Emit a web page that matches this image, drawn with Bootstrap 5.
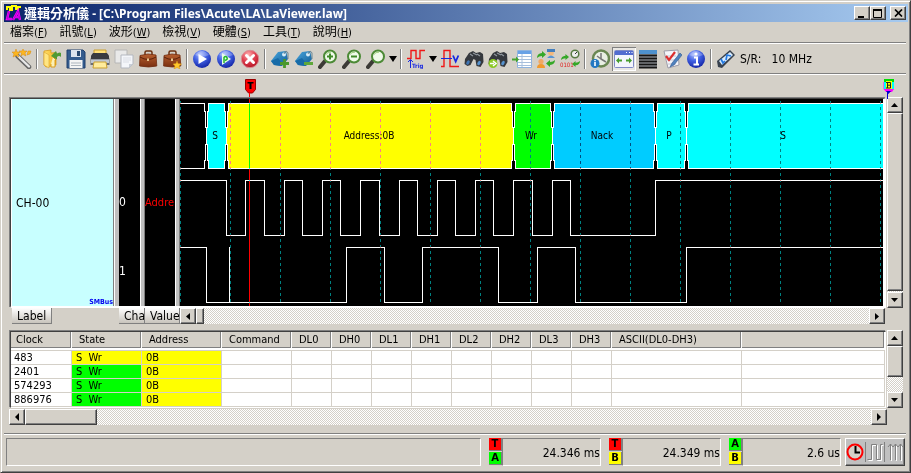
<!DOCTYPE html>
<html lang="zh-Hant">
<head>
<meta charset="utf-8">
<meta name="viewport" content="width=device-width, initial-scale=1">
<title>邏輯分析儀 - LaViewer.law</title>
<link href="https://cdn.jsdelivr.net/npm/bootstrap@5.3.0/dist/css/bootstrap.min.css" rel="stylesheet">
<style>
:root{--face:#d4d0c8;--shade:#808080;--dark:#404040}
body{background:var(--face);color:#000;font:11px/14px "DejaVu Sans Condensed","Noto Sans CJK TC",sans-serif}
button{font:inherit;color:inherit;padding:0;border:0;background:none}
.window{border:1px solid var(--face);border-right-color:var(--dark);border-bottom-color:var(--dark);box-shadow:inset 1px 1px #fff,inset -1px -1px var(--shade);padding:3px 2px 0 3px}
.titlebar{height:18px;background:linear-gradient(90deg,#0a246a,#a6caf0);color:#fff;font-weight:700;padding:0 2px 0 1px}
.titlebar h1{font:bold 12px/18px "Noto Sans","Noto Sans CJK TC",sans-serif}
.titlebar .cjk{font-size:13px}
.titlebar .app-icon{margin-right:2px}
.raised{background:var(--face);border:1px solid;border-color:#fff var(--dark) var(--dark) #fff;box-shadow:inset -1px -1px var(--shade);display:flex;align-items:center;justify-content:center;flex:none;padding:0}
.capbtn{width:16px;height:14px}
.menubar{height:20px;padding:0 6px;gap:12px}
.menubar .cjk{font-size:12px}
.rule{height:2px;background:var(--shade);border-bottom:1px solid #fff;margin-right:2px}
.tools{height:29px;padding-left:6px}
.tool{width:24px;height:24px;display:flex;align-items:center;justify-content:center;flex:none}
.tool svg{width:20px;height:20px}
.tool.pressed{background:#e9e7e3;box-shadow:inset 1px 1px var(--shade),inset -1px -1px #fff}
.drop{width:10px;height:24px;display:flex;align-items:center;justify-content:center}
.gap-line{width:2px;height:20px;margin:0 2px;background:var(--shade);border-right:1px solid #fff;flex:none}
.big{font-size:12px}
.rate{margin-left:2px}
.ruler{height:22px;padding:4px 13px 0 241px}
.ruler svg{position:relative;z-index:2}
.workspace{padding:0 5px}
.well{border:2px solid;border-color:var(--dark) #fff #fff var(--dark);box-shadow:-1px -1px var(--shade);background:#000}
.well-outer{padding:1px 0 0 1px}
.well-outer>.well{border-width:1px 3px 2px 1px}
.pane-label{width:108px;background:#c8ffff;border-left:1px solid #fff}
.pane-channel{width:26px}
.pane-value{width:35px}
.split{width:5px;background:#c0c0c0;border-left:1px solid #fff;border-right:1px solid var(--shade);flex:none}
.pane-label .split{width:6px;border-left:1px solid var(--shade);border-right:1px solid #c0c0c0;box-shadow:inset 1px 0 #fff}
.trace-pane{height:207px}
.channels{padding-top:69px}
.channels div{height:69px;line-height:69px}
.value-text{color:#f00;font-size:11px}
.smb{color:#0000f0;font:bold 7px/8px "DejaVu Sans Condensed",sans-serif}
.vbar,.hbar{background:repeating-conic-gradient(#fff 0 25%,#d4d0c8 0 50%) 0 0/2px 2px}
.vbar{width:16px;flex:none;display:flex;flex-direction:column;margin-left:1px}
.vbar .raised{width:16px;height:16px}
.hbar{height:16px;display:flex}
.hbar .raised{height:16px;width:16px}
.vbar .thumb-long{flex:1;margin-bottom:1px}
.vbar .thumb-short{height:31px}
.hbar .thumb-narrow{width:8px}
.hbar .thumb-wide{width:72px}
.panes-foot{padding:0 18px 0 3px;margin-bottom:6px}
.records-foot{margin:1px 16px 7px 0}
.headbtn{height:16px;background:linear-gradient(#fff,#c8c4bc);border-right:1px solid var(--shade);border-bottom:1px solid var(--shade);font-size:12px;overflow:hidden;text-align:left;padding-left:5px;white-space:nowrap;flex:none}
.btn-label{width:40px;margin-right:67px}
.btn-cha{width:26px}
.btn-val{width:35px}
.list-frame{background:#fff;border:1px solid;border-color:var(--dark) #fff #fff var(--dark);box-shadow:-1px -1px var(--shade)}
.records{width:100%;table-layout:fixed;border-collapse:separate;border-spacing:0}
.records th{height:18px;font-weight:400;padding:0 0 0 7px;line-height:16px;background:var(--face);border-bottom:2px solid #fff;box-shadow:inset -1px 0 #fff,inset -2px -1px var(--shade);white-space:nowrap}
.records th:first-child{padding-left:5px}
.records td{height:14px;line-height:13px;padding:0 0 0 4px;border-right:1px solid var(--face);border-bottom:1px solid var(--face);white-space:pre}
.records td:first-child{padding-left:3px}
.records tbody tr:first-child td{height:15px;border-top:1px solid var(--face)}
.yel{background:#ff0}.grn{background:#0f0}
.statusbar{padding:3px 3px 6px 2px}
.sunk{height:28px;border:1px solid;border-color:var(--shade) #fff #fff var(--shade)}
.reading{width:99px;font-size:12px;padding-top:2px}
.tags{width:13px;gap:1px}
.tagbox{height:13px;font:bold 10px/12px "DejaVu Sans",sans-serif;border-right:1px solid var(--shade);border-bottom:1px solid var(--shade);text-align:center}
.red{background:#f00}
.modes{width:60px;height:28px;background:#c0c0c0;border:1px solid;border-color:#fff var(--dark) var(--dark) #fff;box-shadow:inset -1px -1px var(--shade)}
.gridline{mix-blend-mode:difference}
.wave{fill:none;stroke:#fff;shape-rendering:crispEdges}
</style>
<script src="https://cdn.jsdelivr.net/npm/bootstrap@5.3.0/dist/js/bootstrap.bundle.min.js"></script>
</head>
<body>
<svg class="position-absolute" width="0" height="0" aria-hidden="true">
  <defs>
    <radialGradient id="gBlue" cx=".4" cy=".25" r=".8"><stop offset="0" stop-color="#a9bcff"/><stop offset=".45" stop-color="#4262e4"/><stop offset="1" stop-color="#1020a0"/></radialGradient>
    <radialGradient id="gRed" cx=".4" cy=".25" r=".8"><stop offset="0" stop-color="#ffb0b0"/><stop offset=".5" stop-color="#e04050"/><stop offset="1" stop-color="#b01020"/></radialGradient>
    <linearGradient id="gCase" x2="0" y2="1"><stop offset="0" stop-color="#b86030"/><stop offset="1" stop-color="#7a2f10"/></linearGradient>
    <linearGradient id="gTag" x2="1" y2="1"><stop offset="0" stop-color="#4aa8e0"/><stop offset="1" stop-color="#105a94"/></linearGradient>
    <linearGradient id="gFold" x2="1"><stop offset="0" stop-color="#ffe070"/><stop offset="1" stop-color="#f2b01c"/></linearGradient>
    <symbol id="case" viewBox="0 0 20 20"><path d="M7 6V3.500q0-1.500 1.500-1.500h4q1.500 0 1.500 1.500V6" fill="none" stroke="#6b3010" stroke-width="1.500"/><path d="M2 6.500l8-1.500 8 1 .8 11q-8 2-17.200 0z" fill="url(#gCase)" stroke="#702c10" stroke-width=".8"/><path d="M2 8q8 5 16 0" fill="none" stroke="#5c200a"/><rect x="9" y="9.500" width="2" height="2.500" fill="#e8c48c"/></symbol>
    <symbol id="tag" viewBox="0 0 20 20"><path d="M1 12L8 3l8-1 2 8-6 7-8-1z" fill="url(#gTag)"/><path d="M1 12l7-3 5 6-2 2-7-1z" fill="#176ba8"/><circle cx="14" cy="5.500" r="2" fill="#d6ecf8"/><path d="M14 5Q16 0 18 4v6" fill="none" stroke="#6d8794"/></symbol>
    <symbol id="lens" viewBox="0 0 20 20"><path d="M7 12L2 18" stroke="#3c3a36" stroke-width="4" stroke-linecap="round"/><circle cx="12" cy="7.500" r="6" fill="#f0faea" stroke="#4c8a36" stroke-width="2"/><path d="M8 5.500Q9.500 3 13 3.200" stroke="#9fd07f" fill="none"/></symbol>
    <symbol id="bino" viewBox="0 0 20 20"><path d="M1 10L5 4l4-2 3 2 4-1 3 2 .5 8-3 5-4-1-1-6-2-1-3 6-3 1-3-2z" fill="#35383d"/><path d="M6 5l3 2M13 5l3 2M9 4l4 2" stroke="#90979e" stroke-width="1.200"/><ellipse cx="4" cy="13.500" rx="1.500" ry="2.400" fill="#3f76b6" transform="rotate(30 4 13.500)"/><ellipse cx="15" cy="14" rx="1.500" ry="2.400" fill="#5793cf" transform="rotate(30 15 14)"/></symbol>
    <symbol id="ball" viewBox="0 0 20 20"><circle cx="10" cy="10" r="9" fill="url(#gBlue)"/><path d="M3 6q7-8 14 0-7 3-14 0z" fill="#fff" opacity=".25"/></symbol>
    <symbol id="swap" viewBox="0 0 9 9"><path d="M0 8Q0 3.500 5 3V1l4 3.500L5 8V6Q2 6 0 8z" fill="#35a828"/></symbol>
  </defs>
</svg>

<div class="window min-vh-100 d-flex flex-column">
  <header class="titlebar d-flex align-items-center">
    <svg width="17" height="16" viewBox="0 0 17 16" class="app-icon flex-shrink-0"><path d="M2 5V2h3v3h2V1h4v3h2V2h3" fill="none" stroke="#ff0" stroke-width="2"/><path d="M4 6L2 14h5M8 15l5-9 2 9M10 12h5" fill="none" stroke="#f0f" stroke-width="2.400"/><path d="M4 6L2 14h5M8 15l5-9 2 9M10 12h5" fill="none" stroke="#a000d0" stroke-width=".8"/></svg>
    <h1 class="m-0 flex-fill text-nowrap"><span class="cjk">邏輯分析儀</span> - [C:\Program Files\Acute\LA\LaViewer.law]</h1>
    <button class="raised capbtn" aria-label="Minimize"><svg width="10" height="9"><path d="M1 7h6v2H1z"/></svg></button>
    <button class="raised capbtn" aria-label="Maximize"><svg width="10" height="9"><path d="M.5 1.500h8v7h-8z" fill="none" stroke="#000"/><path d="M0 0h9v2H0z"/></svg></button>
    <button class="raised capbtn ms-1" aria-label="Close"><svg width="9" height="8"><path d="M1 .5l7 7M8 .5l-7 7" stroke="#000" stroke-width="1.700"/></svg></button>
  </header>
  <nav class="menubar d-flex align-items-center text-nowrap">
    <button><span class="cjk">檔案</span>(<u>F</u>)</button><button><span class="cjk">訊號</span>(<u>L</u>)</button><button><span class="cjk">波形</span>(<u>W</u>)</button><button><span class="cjk">檢視</span>(<u>V</u>)</button><button><span class="cjk">硬體</span>(<u>S</u>)</button><button><span class="cjk">工具</span>(<u>T</u>)</button><button><span class="cjk">說明</span>(<u>H</u>)</button>
  </nav>
  <div class="rule"></div>
  <div class="tools d-flex align-items-center" role="toolbar">
    <button class="tool" aria-label="Wizard"><svg viewBox="0 0 20 20"><path d="M5.500 7L17 18" stroke="#666" stroke-width="4.500" stroke-linecap="round"/><path d="M6 7l11 10.500" stroke="#e8e8e8" stroke-width="2.400" stroke-linecap="round"/><path d="M4 0l1 3 3 0-2 2.500 1 2.500-3-1.500L1 8l1-3-2-2 3 0zM11 0l1 2h3l-2 2 1 3-3-1.500-2 1.500.5-3L7 2h3zM16 2l3 0-1 3-3 1z" fill="#fcb61f" stroke="#d98b10" stroke-width=".5"/></svg></button>
    <span class="gap-line"></span>
    <button class="tool" aria-label="Open"><svg viewBox="0 0 20 20"><path d="M2 2l7-1v3l5-.5V16l-10 2-2-2z" fill="url(#gFold)" stroke="#d79613" stroke-width=".7"/><path d="M2 3l5 3v13l-5-3z" fill="#ffe582" stroke="#dca22a" stroke-width=".6"/><path d="M11 8l3 3-1 0v7h-4v-3" fill="#fbf0b8" stroke="#d79613" stroke-width=".9"/><path d="M9 7l5-5 1 2.500Q18 3 19 4v4q-2-2-4 0l0 2.500z" fill="#4f9a35"/></svg></button>
    <button class="tool" aria-label="Save"><svg viewBox="0 0 20 20"><path d="M1 1h16l2 2v16H1z" fill="#345c8e" stroke="#1e3f6d"/><path d="M5 1h10v7H5z" fill="#dce4ee"/><path d="M11 2h3v5h-3z" fill="#28486f"/><path d="M3.500 11h13v8h-13z" fill="#f4f4f4"/><path d="M5 14h10M5 16.500h10" stroke="#adb5bd"/></svg></button>
    <button class="tool" aria-label="Print"><svg viewBox="0 0 20 20"><path d="M4 1h12v5H4z" fill="#ffe17a" stroke="#caa030"/><path d="M2 5h16l1.500 5v6H.5v-6z" fill="#6b6e73"/><path d="M1 7l2-3h14l2 3v3H1z" fill="#383b40"/><path d="M1 10.500h18V14H1z" fill="#bfc6d2"/><path d="M4 13h12l1 6H3z" fill="#ffec9c" stroke="#caa030"/></svg></button>
    <button class="tool" aria-label="Copy"><svg viewBox="0 0 20 20"><path d="M1 1h12v13H1z" fill="#e9e9e9" stroke="#b6b6b6"/><path d="M7 6h12v9l-4 4H7z" fill="#f4f6fa" stroke="#b3b7bf"/><path d="M19 15h-4v4z" fill="#c8cdd5"/><path d="M9 9h8M9 11h8M9 13h6" stroke="#dadde5"/></svg></button>
    <button class="tool" aria-label="Toolbox"><svg><use href="#case"/></svg></button>
    <button class="tool" aria-label="New toolbox"><svg viewBox="0 0 20 20"><use href="#case"/><path d="M15 12l1 2.500 3.500.5-2.500 2 1 3-3-1.500-3 1.500 1-3-2-2 3-.5z" fill="#ffc62a" stroke="#d68f13" stroke-width=".5"/></svg></button>
    <span class="gap-line"></span>
    <button class="tool" aria-label="Run"><svg viewBox="0 0 20 20"><use href="#ball"/><path d="M6.500 5l8.500 5-8.500 5z" fill="#fff"/></svg></button>
    <button class="tool" aria-label="Repeat run"><svg viewBox="0 0 20 20"><use href="#ball"/><path d="M6 4l9 6-9 6z" fill="#e8ffe8"/><path d="M8 14V8.500q1.500-2 3 0 1 2-2 3" fill="none" stroke="#21b52c" stroke-width="1.500"/></svg></button>
    <button class="tool" aria-label="Stop"><svg viewBox="0 0 20 20"><circle cx="10" cy="10" r="8.700" fill="url(#gRed)" stroke="#d98e94"/><path d="M6.500 6.500l7 7M13.500 6.500l-7 7" stroke="#fff" stroke-width="3" stroke-linecap="round"/></svg></button>
    <span class="gap-line"></span>
    <button class="tool" aria-label="Add label"><svg viewBox="0 0 20 20"><use href="#tag"/><path d="M14.500 10v9M10 14.500h9" stroke="#4b982d" stroke-width="2.800"/></svg></button>
    <button class="tool" aria-label="Remove label"><svg viewBox="0 0 20 20"><use href="#tag"/><path d="M10 14.500h9" stroke="#5fa83a" stroke-width="3"/></svg></button>
    <button class="tool" aria-label="Zoom in"><svg viewBox="0 0 20 20"><use href="#lens"/><path d="M12 4.500v6M9 7.500h6" stroke="#3f8a28" stroke-width="2"/></svg></button>
    <button class="tool" aria-label="Zoom out"><svg viewBox="0 0 20 20"><use href="#lens"/><path d="M9 7.500h6" stroke="#3f8a28" stroke-width="2"/></svg></button>
    <button class="tool" aria-label="Zoom"><svg><use href="#lens"/></svg></button>
    <button class="drop" aria-label="Zoom levels"><svg width="8" height="6"><path d="M0 0h8L4 6z"/></svg></button>
    <span class="gap-line"></span>
    <button class="tool" aria-label="Trigger"><svg viewBox="0 0 20 20"><path d="M1 9.500h4v-8h5v8h4v-8h5" fill="none" stroke="#f01818" stroke-width="1.400"/><path d="M4.500 19v-8M2 13l2.500-2.500L7 13" fill="none" stroke="#1828e0"/><text x="6" y="19" font-family="DejaVu Sans Condensed" font-size="6" font-weight="700" fill="#1828e0">Trig</text></svg></button>
    <button class="drop" aria-label="Trigger options"><svg width="8" height="6"><path d="M0 0h8L4 6z"/></svg></button>
    <button class="tool" aria-label="Voltage"><svg viewBox="0 0 20 20"><path d="M1 17.500h3v-16h6v16h9" fill="none" stroke="#f01818" stroke-width="1.400"/><path d="M1 9.500h11" stroke="#1828e0"/><path d="M13 6.500l2.700 6 2.700-6" fill="none" stroke="#1828e0" stroke-width="1.800"/></svg></button>
    <button class="tool" aria-label="Find"><svg><use href="#bino"/></svg></button>
    <button class="tool" aria-label="Find next"><svg viewBox="0 0 20 20"><use href="#bino"/><circle cx="5" cy="14.500" r="4.500" fill="#8bc924"/><path d="M2 14.500h4M5 12l3 2.500L5 17" stroke="#fff" stroke-width="1.500" fill="none"/></svg></button>
    <button class="tool" aria-label="Go to list"><svg viewBox="0 0 20 20"><path d="M5.500 1.500h14v17h-14z" fill="#fff" stroke="#8fb3de"/><path d="M6 2h13v3H6z" fill="#69a2e6"/><path d="M6 7.500h13M6 10.500h13M6 13.500h13M6 16.500h13M10 5v13" stroke="#a7bfdc"/><path d="M0 9.500h4v-2l3 3-3 3v-2H0z" fill="#44a32f"/></svg></button>
    <button class="tool" aria-label="Swap users"><svg viewBox="0 0 20 20"><use href="#swap" x="1" y="1" width="9" height="9"/><g transform="rotate(180 14.500 14.500)"><use href="#swap" x="10" y="10" width="9" height="9"/></g><circle cx="15" cy="4" r="2.800" fill="#f4b87b"/><path d="M11 0h8v3h-8z" fill="#457fbd"/><path d="M11 9q4-5 8 0z" fill="#5795d5"/><circle cx="5" cy="12.500" r="2.600" fill="#f1a864"/><path d="M1 19q0-4 4-4t4 4z" fill="#f39a2d"/></svg></button>
    <button class="tool" aria-label="Convert time"><svg viewBox="0 0 20 20"><use href="#swap" x="1" y="4" width="8" height="8"/><g transform="rotate(180 16 15)"><use href="#swap" x="12" y="11" width="8" height="8"/></g><circle cx="15" cy="5" r="3.800" fill="#eee" stroke="#587b43" stroke-width="1.500"/><path d="M15 5l2-2" stroke="#333"/><text x="0" y="18" font-family="DejaVu Sans Condensed" font-size="6" fill="#e02020">0101</text></svg></button>
    <span class="gap-line"></span>
    <button class="tool" aria-label="Timing info"><svg viewBox="0 0 20 20"><circle cx="11" cy="9.500" r="8" fill="#e9efe4" stroke="#698752" stroke-width="2.500"/><path d="M11 4v6l5 3M11 10l-4-3" fill="none" stroke="#777" stroke-width="1.500"/><circle cx="5" cy="14.500" r="4.500" fill="#2377c2"/><path d="M5 13v4M5 11v1.200" stroke="#fff" stroke-width="1.600"/></svg></button>
    <button class="tool pressed" aria-label="Fit window" aria-pressed="true"><svg viewBox="0 0 20 20"><rect x=".5" y="1.500" width="19" height="17" rx="1" fill="#f4f5fc" stroke="#7f8ac5"/><path d="M1 2h18v4H1z" fill="#536cd0"/><path d="M12 3.500h1M15 3.500h1M17.500 3.500h1" stroke="#fff"/><path d="M2 11.500l3-3v2h3v2H5v2zM18 11.500l-3-3v2h-3v2h3v2z" fill="#479d2e"/></svg></button>
    <button class="tool" aria-label="Lines"><svg viewBox="0 0 20 20"><path d="M1 1h18v18H1z" fill="#aeb3b8"/><path d="M1 1h18v4H1z" fill="#4e91cd"/><path d="M1 6.500h18M1 9.500h18M1 12.500h18M1 15.500h18M1 18.500h18" stroke="#151515" stroke-width="1.800"/></svg></button>
    <button class="tool" aria-label="Report"><svg viewBox="0 0 20 20"><path d="M2 2l14-1 1 15-11 3z" fill="#f5f5fa" stroke="#9c9ca8"/><path d="M4 7h10M4 11h10M6 15h8" stroke="#c3c7d5"/><path d="M4 7l3 4 6-8" fill="none" stroke="#dc2f2f" stroke-width="2.200"/><path d="M18 4l-8 10-2 4 4-2 8-10z" fill="#4f82be" stroke="#2f588e" stroke-width=".6"/></svg></button>
    <button class="tool" aria-label="About"><svg viewBox="0 0 20 20"><use href="#ball"/><path d="M8 8.500h3V15M7.500 15.500h5.500" fill="none" stroke="#fff" stroke-width="2"/><circle cx="10" cy="5" r="1.600" fill="#fff"/></svg></button>
    <span class="gap-line"></span>
    <button class="tool" aria-label="Device"><svg viewBox="0 0 20 20"><path d="M1 12L14 1l5 5L6 19l-4-1z" fill="#39424f"/><path d="M3 12l11-9 3 3L6 16z" fill="#d8ecff"/><path d="M5 10l2 4 2-2M10 11l1-5 4 1" fill="none" stroke="#2378e0" stroke-width="1.700"/></svg></button>
    <span class="big rate text-nowrap">S/R: &nbsp; 10 MHz</span>
  </div>
  <div class="rule"></div>

  <div class="ruler d-flex justify-content-between">
    <svg width="12" height="18" viewBox="0 0 12 18"><path d="M.5.500h10v10l-3 3.500h-4l-3-3.500z" fill="#f00" stroke="#900"/><path d="M4.500 14v4" stroke="#f00" shape-rendering="crispEdges"/><path d="M2.500 3h6v1.500h-2V10h-2V4.500h-2z"/></svg>
    <svg width="12" height="20" viewBox="0 0 12 20"><path d="M1 0h10v3H1z" fill="#0d0"/><path d="M.5 3h10.500v7l-2 3H3l-2.500-3z" fill="#f0f"/><path d="M1 3h2v7H1zM9 3h2v7H9z" fill="#0ff"/><path d="M3 2h6v8H3z" fill="#ff0"/><path d="M3 3.500h4.500V9H3M4.500 3.500V9M4.500 6.200h3" fill="none" stroke="#222"/><path d="M3 12h5l-2.500 3z" fill="#00c"/><path d="M4.500 13v7" stroke="#00c"/></svg>
  </div>

  <main class="workspace flex-fill">
    <section class="d-flex" aria-label="Waveform">
      <div class="flex-fill overflow-hidden well-outer">
        <div class="well d-flex">
          <div class="pane-label d-flex flex-shrink-0">
            <div class="flex-fill d-flex flex-column justify-content-center position-relative big ps-1">CH-00<span class="smb position-absolute bottom-0 end-0">SMBus</span></div>
            <div class="split"></div>
          </div>
          <div class="pane-channel d-flex flex-shrink-0 text-white big"><div class="flex-fill channels"><div>0</div><div>1</div></div><div class="split"></div></div>
          <div class="pane-value d-flex flex-shrink-0"><div class="flex-fill overflow-hidden d-flex align-items-center value-text">Addre</div><div class="split"></div></div>
          <div class="trace-pane flex-fill overflow-hidden">
            <svg width="100%" height="207" font-family="DejaVu Sans Condensed, sans-serif" font-size="10">
              <rect width="100%" height="207"/>
              <g stroke="#fff" shape-rendering="crispEdges">
                <path fill="#000" d="M-5 4.500H24.500v8h1v16h1v17h-1v16h-1v8H-5z"/>
                <path fill="#0ff" d="M28.500 4.500v8h-1v16h-1v17h1v16h1v8H44.500v-8h1v-16h1v-17h-1v-16h-1v-8z"/>
                <path fill="#ff0" d="M48.500 4.500v8h-1v16h-1v17h1v16h1v8H331.500v-8h1v-16h1v-17h-1v-16h-1v-8z"/>
                <path fill="#0f0" d="M335.500 4.500v8h-1v16h-1v17h1v16h1v8H370.500v-8h1v-16h1v-17h-1v-16h-1v-8z"/>
                <path fill="#0cf" d="M374.500 4.500v8h-1v16h-1v17h1v16h1v8H473.500v-8h1v-16h1v-17h-1v-16h-1v-8z"/>
                <path fill="#0ff" d="M477.500 4.500v8h-1v16h-1v17h1v16h1v8H504.500v-8h1v-16h1v-17h-1v-16h-1v-8z"/>
                <path fill="#0ff" d="M508.500 4.500v8h-1v16h-1v17h1v16h1v8H3000V4.500z"/>
              </g>
              <path class="wave" d="M0 81.500H46.500V136.500H65.500V81.500H84.500V136.500H104.500V81.500H122.500V136.500H142.500V81.500H160.500V136.500H180.500V81.500H199.500V136.500H219.500V81.500H237.500V136.500H257.500V81.500H275.500V136.500H295.500V81.500H313.500V136.500H333.500V81.500H352.500V136.500H372.500V81.500H390.500V136.500H475.500V81.500H3000"/>
              <path class="wave" d="M0 148.500H26.500V203.500H166.500V148.500H204.500V203.500H242.500V148.500H318.500V203.500H357.500V148.500H395.500V203.500H506.500V148.500H3000M49.500 148V203"/>
              <g text-anchor="middle"><text x="35" y="40">S</text><text x="189" y="40">Address:0B</text><text x="351" y="40">Wr</text><text x="422" y="40">Nack</text><text x="489" y="40">P</text><text x="603" y="40">S</text></g>
              <path class="gridline" fill="none" stroke="#008080" stroke-dasharray="3 3" shape-rendering="crispEdges" d="M.5 2V203M50.500 2V203M100.500 2V203M150.500 2V203M200.500 2V203M250.500 2V203M300.500 2V203M350.500 2V203M400.500 2V203M450.500 2V203M500.500 2V203M550.500 2V203M600.500 2V203M650.500 2V203M700.500 2V203"/>
              <path class="gridline" stroke="#f00" shape-rendering="crispEdges" d="M69.500 0V207"/>
            </svg>
          </div>
        </div>
      </div>
      <div class="vbar">
        <button class="raised" aria-label="Scroll up"><svg width="8" height="5"><path d="M0 4h7L3.500 0z"/></svg></button>
        <div class="raised thumb-long"></div>
        <button class="raised" aria-label="Scroll down"><svg width="8" height="5"><path d="M0 0h7L3.500 4z"/></svg></button>
      </div>
    </section>
    <div class="d-flex panes-foot">
      <button class="headbtn btn-label">Label</button><button class="headbtn btn-cha">Cha</button><button class="headbtn btn-val">Value</button>
      <div class="hbar flex-fill"><button class="raised" aria-label="Scroll left"><svg width="5" height="7"><path d="M4 0v7L0 3.500z"/></svg></button><div class="raised thumb-narrow"></div><button class="raised ms-auto" aria-label="Scroll right"><svg width="5" height="7"><path d="M0 0v7l4-3.500z"/></svg></button></div>
    </div>

    <section class="d-flex" aria-label="Decoded records">
      <div class="flex-fill overflow-hidden well-outer">
        <div class="list-frame">
          <table class="records">
            <colgroup><col width="61"><col width="70"><col width="80"><col width="70"><col width="40"><col width="40"><col width="40"><col width="40"><col width="40"><col width="40"><col width="40"><col width="40"><col width="130"><col></colgroup>
            <thead><tr><th>Clock</th><th>State</th><th>Address</th><th>Command</th><th>DL0</th><th>DH0</th><th>DL1</th><th>DH1</th><th>DL2</th><th>DH2</th><th>DL3</th><th>DH3</th><th>ASCII(DL0-DH3)</th><th></th></tr></thead>
            <tbody>
              <tr><td>483</td><td class="yel">S  Wr</td><td class="yel">0B</td><td></td><td></td><td></td><td></td><td></td><td></td><td></td><td></td><td></td><td></td><td></td></tr>
              <tr><td>2401</td><td class="grn">S  Wr</td><td class="yel">0B</td><td></td><td></td><td></td><td></td><td></td><td></td><td></td><td></td><td></td><td></td><td></td></tr>
              <tr><td>574293</td><td class="grn">S  Wr</td><td class="yel">0B</td><td></td><td></td><td></td><td></td><td></td><td></td><td></td><td></td><td></td><td></td><td></td></tr>
              <tr><td>886976</td><td class="grn">S  Wr</td><td class="yel">0B</td><td></td><td></td><td></td><td></td><td></td><td></td><td></td><td></td><td></td><td></td><td></td></tr>
            </tbody>
          </table>
        </div>
      </div>
      <div class="vbar">
        <button class="raised" aria-label="Scroll up"><svg width="8" height="5"><path d="M0 4h7L3.500 0z"/></svg></button>
        <div class="raised thumb-short"></div>
        <button class="raised mt-auto" aria-label="Scroll down"><svg width="8" height="5"><path d="M0 0h7L3.500 4z"/></svg></button>
      </div>
    </section>
    <div class="hbar records-foot"><button class="raised" aria-label="Scroll left"><svg width="5" height="8"><path d="M4 0v8L0 4z"/></svg></button><div class="raised thumb-wide"></div><button class="raised ms-auto" aria-label="Scroll right"><svg width="5" height="8"><path d="M0 0v8l4-4z"/></svg></button></div>
  </main>

  <div class="rule"></div>
  <footer class="statusbar d-flex">
    <div class="sunk flex-fill me-2"></div>
    <div class="tags d-flex flex-column"><span class="tagbox red">T</span><span class="tagbox grn">A</span></div>
    <div class="sunk reading d-flex align-items-center justify-content-end me-2">24.346 ms</div>
    <div class="tags d-flex flex-column"><span class="tagbox red">T</span><span class="tagbox yel">B</span></div>
    <div class="sunk reading d-flex align-items-center justify-content-end me-2">24.349 ms</div>
    <div class="tags d-flex flex-column"><span class="tagbox grn">A</span><span class="tagbox yel">B</span></div>
    <div class="sunk reading d-flex align-items-center justify-content-end me-1">2.6 us</div>
    <div class="modes"><svg width="58" height="26" viewBox="0 0 58 26"><circle cx="9" cy="13" r="7.500" fill="#d4d0c8" stroke="#f00" stroke-width="2"/><path d="M9.500 7v6.500H14" fill="none" stroke="#000" stroke-width="2"/><g fill="none" stroke="#fff" transform="translate(1 1)"><path d="M21.500 20.500h4v-15h5v15h4v-15h2"/><path d="M44.500 21V5M49.500 21V5M54.500 21V5"/></g><g fill="none" stroke="#808080"><path d="M19.500 3v20M38.500 3v20"/><path d="M21.500 20.500h4v-15h5v15h4v-15h2"/><path d="M44.500 21V5M49.500 21V5M54.500 21V5M42 8l2.500-3L47 8l2.500-3L52 8l2.500-3L57 8"/></g></svg></div>
  </footer>
</div>
</body>
</html>
